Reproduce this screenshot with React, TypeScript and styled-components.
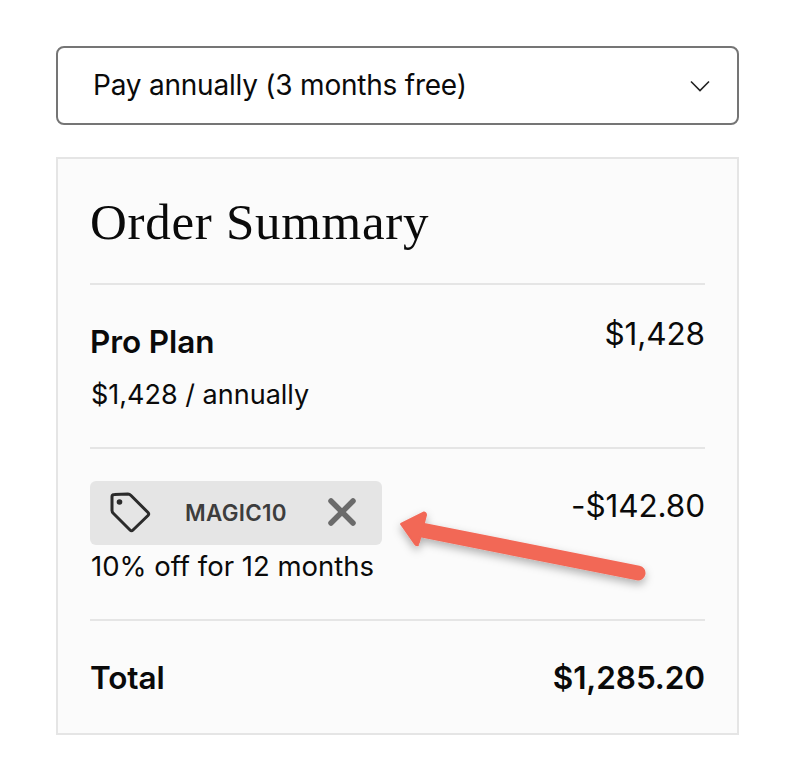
import styled, { createGlobalStyle } from "styled-components";

const GlobalStyle = createGlobalStyle`
  html, body {
    margin: 0;
    padding: 0;
    background: #ffffff;
    color: #0a0a0a;
    font-family: Inter, "Liberation Sans", sans-serif;
  }
`;

const Page = styled.div`
  position: relative;
  box-sizing: border-box;
  width: 788px;
  height: 778px;
  padding: 46px 49px 0 56px;
  display: flex;
  flex-direction: column;
  gap: 32px;
`;

const Select = styled.div`
  box-sizing: border-box;
  height: 79px;
  display: flex;
  align-items: center;
  justify-content: space-between;
  padding: 0 27px 2px 35px;
  border: 2px solid #757575;
  border-radius: 8px;
  font-size: 28px;
  letter-spacing: -0.22px;
`;

const Chevron = styled.svg`
  margin-top: 2px;
`;

const Card = styled.section`
  box-sizing: border-box;
  height: 578px;
  padding: 0 32px;
  background: #fbfbfb;
  border: 2px solid #e5e5e5;
`;

const Heading = styled.h2`
  box-sizing: border-box;
  height: 124px;
  margin: 0;
  padding-top: 30px;
  font-family: "Liberation Serif", serif;
  font-size: 51px;
  line-height: 66px;
  font-weight: 400;
  letter-spacing: 0.7px;
`;

const Row = styled.div<{ $height: number }>`
  box-sizing: border-box;
  height: ${(p) => p.$height}px;
  display: flex;
  justify-content: space-between;
  align-items: flex-start;
  border-top: 2px solid #e5e5e5;
`;

const Col = styled.div`
  display: flex;
  flex-direction: column;
`;

const Title = styled.div`
  margin-top: 37px;
  font-size: 31.5px;
  line-height: 40px;
  font-weight: 600;
  letter-spacing: -0.1px;
`;

const Sub = styled.div`
  margin-top: 14px;
  padding-left: 1px;
  font-size: 27px;
  line-height: 38px;
`;

const Price = styled.div<{ $top: number }>`
  margin-top: ${(p) => p.$top}px;
  font-size: 31.5px;
  line-height: 40px;
  letter-spacing: -0.1px;
`;

const Chip = styled.div`
  box-sizing: border-box;
  width: 292px;
  height: 64px;
  margin-top: 32px;
  display: flex;
  align-items: center;
  padding: 0 26px 2px 19px;
  background: #e5e5e5;
  border-radius: 6px;
`;

const ChipCode = styled.span`
  margin-left: 32px;
  margin-right: auto;
  font-size: 22.4px;
  font-weight: 600;
  color: #3d3d3d;
  letter-spacing: 0.3px;
`;

const Note = styled.div`
  margin-top: 2px;
  padding-left: 1px;
  font-size: 27.5px;
  line-height: 38px;
`;

const TotalLabel = styled.div`
  margin-top: 37px;
  font-size: 31.5px;
  line-height: 40px;
  font-weight: 600;
  letter-spacing: -0.1px;
`;

const Arrow = styled.svg`
  position: absolute;
  left: 380px;
  top: 495px;
  overflow: visible;
`;

export default function App() {
  return (
    <>
      <GlobalStyle />
      <Page>
        <Select>
          <span>Pay annually (3 months free)</span>
          <Chevron width="20" height="12" viewBox="0 0 20 12" fill="none">
            <path d="M1 1.5 L10 10.5 L19 1.5" stroke="#222" strokeWidth="1.6" />
          </Chevron>
        </Select>
        <Card>
          <Heading>Order Summary</Heading>
          <Row $height={164}>
            <Col>
              <Title>Pro Plan</Title>
              <Sub>$1,428 / annually</Sub>
            </Col>
            <Price $top={29}>$1,428</Price>
          </Row>
          <Row $height={172}>
            <Col>
              <Chip>
                <svg width="44" height="43" viewBox="0 0 44 42" fill="none">
                  <path
                    d="M3 5 C3 3.5 4 3 5.5 3 L19 2.5 C20 2.5 21 3 22 4 L39 21 C40 22 40 23 39 24 L24 38.5 C23 39.5 22 39.5 21 38.5 L4.5 22 C3.5 21 3 20 3 19 Z"
                    stroke="#2b2b2b"
                    strokeWidth="3"
                    strokeLinejoin="round"
                  />
                  <circle cx="10.5" cy="10.5" r="2.8" fill="#2b2b2b" />
                </svg>
                <ChipCode>MAGIC10</ChipCode>
                <svg width="28" height="28" viewBox="0 0 28 28" fill="none">
                  <path d="M3 3 L25 25 M25 3 L3 25" stroke="#6b6b6b" strokeWidth="5.5" strokeLinecap="round" />
                </svg>
              </Chip>
              <Note>10% off for 12 months</Note>
            </Col>
            <Price $top={37}>-$142.80</Price>
          </Row>
          <Row $height={114}>
            <TotalLabel>Total</TotalLabel>
            <TotalLabel>$1,285.20</TotalLabel>
          </Row>
        </Card>
        <Arrow width="270" height="70" viewBox="0 0 270 70">
          <defs>
            <filter id="arrowShadow" x="-10%" y="-30%" width="120%" height="170%">
              <feDropShadow dx="0" dy="4" stdDeviation="4" floodColor="#000" floodOpacity="0.3" />
            </filter>
          </defs>
          <g filter="url(#arrowShadow)" fill="#f26757">
            <path d="M258 78 L34 33.5" stroke="#f26757" strokeWidth="15" strokeLinecap="round" />
            <path
              d="M21 29 L44 17.5 Q46 18 46 20 L39 47 Q38 50 36 49 L38 50 Q36 50.5 35 49 Z"
              stroke="#f26757"
              strokeWidth="2"
              strokeLinejoin="round"
            />
          </g>
        </Arrow>
      </Page>
    </>
  );
}
